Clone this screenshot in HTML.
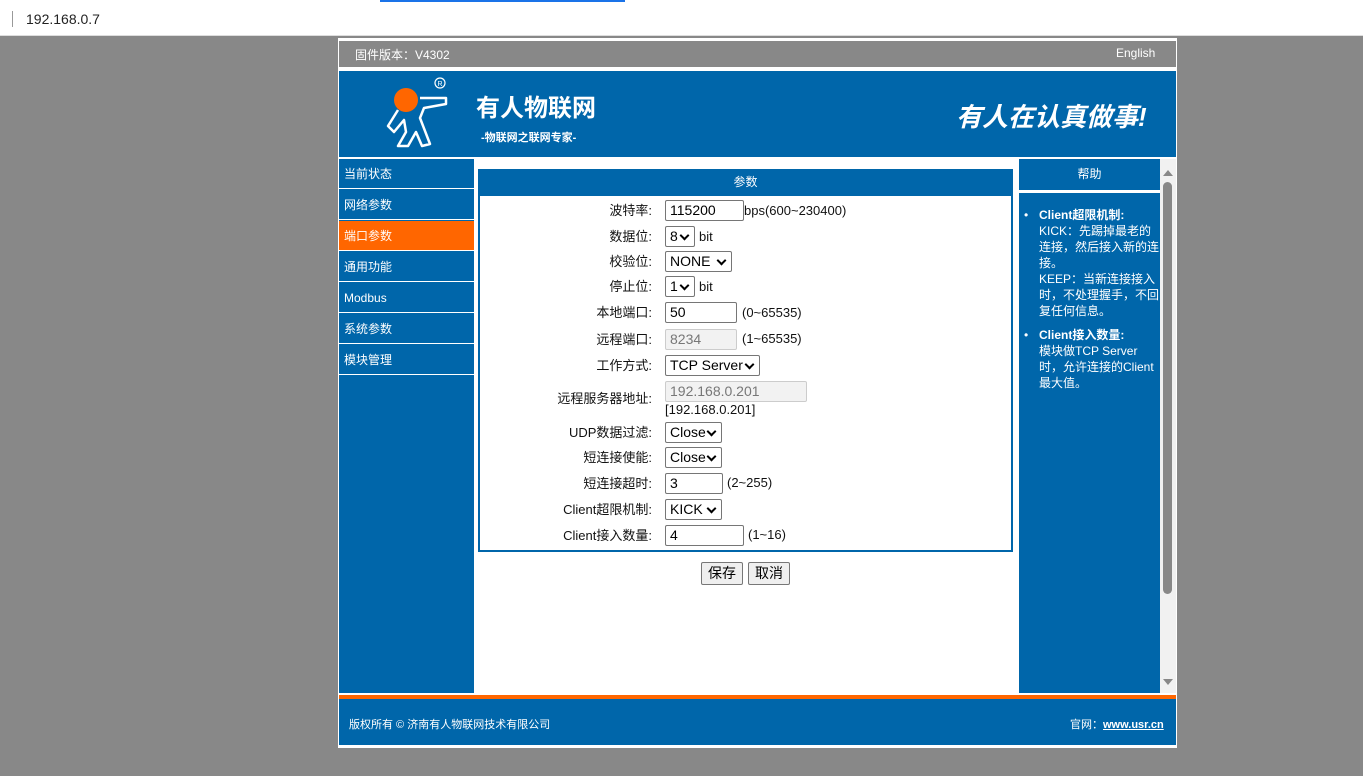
<!DOCTYPE html>
<html><head><meta charset="utf-8"><style>
*{margin:0;padding:0;box-sizing:border-box}
body{width:1363px;height:776px;background:#888;position:relative;overflow:hidden;font-family:"Liberation Sans","Noto Sans CJK SC",sans-serif;font-size:13px}
.a{position:absolute}
.w{color:#fff}
.lab{position:absolute;right:711px;font-size:13px;color:#111;line-height:16px;white-space:nowrap}
.box{position:absolute;border:1px solid #767676;background:#fff;font-size:14px;line-height:18px;padding-left:4px;color:#000;border-radius:2px;height:21px}
.sel::after{content:"";position:absolute;right:6px;top:5px;width:5px;height:5px;border-right:2px solid #000;border-bottom:2px solid #000;transform:rotate(45deg)}
.t{position:absolute;font-size:13px;color:#111;line-height:16px;white-space:nowrap}
.nav{position:absolute;left:339px;width:135px;height:30px;background:#0066aa;color:#fff;font-size:12px;line-height:30px;padding-left:5px;border-bottom:1px solid #fff}
</style></head><body>
<div class="a" style="left:0;top:0;width:1363px;height:36px;background:#fff;border-bottom:1px solid #ddd"></div>
<div class="a" style="left:380px;top:0;width:245px;height:2px;background:#1a73e8"></div>
<div class="a" style="left:12px;top:11px;width:1px;height:16px;background:#999"></div>
<div class="a" style="left:26px;top:11px;font-size:14px;color:#222">192.168.0.7</div>

<div class="a" style="left:338px;top:38px;width:839px;height:710px;background:#fff"></div>
<div class="a" style="left:339px;top:41px;width:837px;height:26px;background:#888"></div>
<div class="a w" style="left:355px;top:46px;font-size:12px">固件版本：V4302</div>
<div class="a w" style="left:1116px;top:46px;font-size:12px">English</div>

<div class="a" style="left:339px;top:71px;width:837px;height:86px;background:#0066aa"></div>
<svg class="a" style="left:380px;top:74px" width="70" height="76" viewBox="0 0 70 76">
<path d="M18 36 L8 52 L14 58 L24 46 L26 58 L18 72 L28 72 L36 58 L42 72 L50 70 L40 44 L44 34 L66 30 L66 24 L40 24" fill="none" stroke="#fff" stroke-width="2.5" stroke-linejoin="round"/>
<circle cx="26" cy="26" r="12" fill="#ff6600"/>
<circle cx="60" cy="9" r="5" fill="none" stroke="#fff" stroke-width="1.2"/>
<text x="57.5" y="12" font-size="7" fill="#fff" font-family="Liberation Sans">R</text>
</svg>
<div class="a w" style="left:476px;top:88px;font-size:24px;font-weight:bold">有人物联网</div>
<div class="a w" style="left:481px;top:129px;font-size:11px;font-weight:bold">-物联网之联网专家-</div>
<div class="a w" style="left:956px;top:97px;font-size:26px;font-weight:bold;font-style:italic">有人在认真做事!</div>

<div class="a" style="left:339px;top:159px;width:135px;height:534px;background:#0066aa"></div>
<div class="nav" style="top:159px">当前状态</div>
<div class="nav" style="top:190px">网络参数</div>
<div class="nav" style="top:221px;background:#ff6600">端口参数</div>
<div class="nav" style="top:252px">通用功能</div>
<div class="nav" style="top:283px">Modbus</div>
<div class="nav" style="top:314px">系统参数</div>
<div class="nav" style="top:345px">模块管理</div>

<div class="a" style="left:478px;top:169px;width:535px;height:383px;border:2px solid #0066aa"></div>
<div class="a w" style="left:478px;top:169px;width:535px;height:27px;background:#0066aa;text-align:center;line-height:27px;font-size:12px">参数</div>

<div class="lab" style="top:203px">波特率:</div><div class="box" style="left:665px;top:200px;width:79px">115200</div><div class="t" style="left:744px;top:203px">bps(600~230400)</div>
<div class="lab" style="top:229px">数据位:</div><div class="box sel" style="left:665px;top:226px;width:30px">8</div><div class="t" style="left:699px;top:229px">bit</div>
<div class="lab" style="top:254px">校验位:</div><div class="box sel" style="left:665px;top:251px;width:67px">NONE</div>
<div class="lab" style="top:279px">停止位:</div><div class="box sel" style="left:665px;top:276px;width:30px">1</div><div class="t" style="left:699px;top:279px">bit</div>
<div class="lab" style="top:305px">本地端口:</div><div class="box" style="left:665px;top:302px;width:72px">50</div><div class="t" style="left:742px;top:305px">(0~65535)</div>
<div class="lab" style="top:332px">远程端口:</div><div class="box" style="left:665px;top:329px;width:72px;background:#f2f2f2;border-color:#ccc;color:#777">8234</div><div class="t" style="left:742px;top:331px">(1~65535)</div>
<div class="lab" style="top:358px">工作方式:</div><div class="box sel" style="left:665px;top:355px;width:95px">TCP Server</div>
<div class="lab" style="top:391px">远程服务器地址:</div><div class="box" style="left:665px;top:381px;width:142px;background:#f2f2f2;border-color:#ccc;color:#777">192.168.0.201</div><div class="t" style="left:665px;top:402px">[192.168.0.201]</div>
<div class="lab" style="top:425px">UDP数据过滤:</div><div class="box sel" style="left:665px;top:422px;width:57px">Close</div>
<div class="lab" style="top:450px">短连接使能:</div><div class="box sel" style="left:665px;top:447px;width:57px">Close</div>
<div class="lab" style="top:476px">短连接超时:</div><div class="box" style="left:665px;top:473px;width:58px">3</div><div class="t" style="left:727px;top:475px">(2~255)</div>
<div class="lab" style="top:502px">Client超限机制:</div><div class="box sel" style="left:665px;top:499px;width:57px">KICK</div>
<div class="lab" style="top:528px">Client接入数量:</div><div class="box" style="left:665px;top:525px;width:79px">4</div><div class="t" style="left:748px;top:527px">(1~16)</div>

<div class="a" style="left:701px;top:562px;width:42px;height:23px;border:1px solid #777;background:#efefef;font-size:14px;line-height:21px;text-align:center;border-radius:2px">保存</div>
<div class="a" style="left:748px;top:562px;width:42px;height:23px;border:1px solid #777;background:#efefef;font-size:14px;line-height:21px;text-align:center;border-radius:2px">取消</div>

<div class="a w" style="left:1019px;top:159px;width:141px;height:31px;background:#0066aa;text-align:center;line-height:31px;font-size:12px">帮助</div>
<div class="a w" style="left:1019px;top:193px;width:141px;height:500px;background:#0066aa;font-size:12px;line-height:16px;padding:14px 0 0 20px">
<div style="position:relative"><span style="position:absolute;left:-15px">•</span><b>Client超限机制:</b><br>KICK：先踢掉最老的连接，然后接入新的连接。<br>KEEP：当新连接接入时，不处理握手，不回复任何信息。</div>
<div style="position:relative;margin-top:8px"><span style="position:absolute;left:-15px">•</span><b>Client接入数量:</b><br>模块做TCP Server时，允许连接的Client最大值。</div>
</div>
<div class="a" style="left:1160px;top:159px;width:16px;height:534px;background:#f1f1f1"></div>
<div class="a" style="left:1163px;top:182px;width:9px;height:412px;background:#888;border-radius:5px"></div>
<div class="a" style="left:1163px;top:170px;width:0;height:0;border-left:5px solid transparent;border-right:5px solid transparent;border-bottom:6px solid #888"></div>
<div class="a" style="left:1163px;top:679px;width:0;height:0;border-left:5px solid transparent;border-right:5px solid transparent;border-top:6px solid #888"></div>

<div class="a" style="left:339px;top:695px;width:837px;height:4px;background:#ff6600"></div>
<div class="a" style="left:339px;top:699px;width:837px;height:46px;background:#0066aa"></div>
<div class="a w" style="left:349px;top:716px;font-size:11px">版权所有 © 济南有人物联网技术有限公司</div>
<div class="a w" style="left:1070px;top:716px;font-size:11px">官网：<b style="text-decoration:underline">www.usr.cn</b></div>
</body></html>
